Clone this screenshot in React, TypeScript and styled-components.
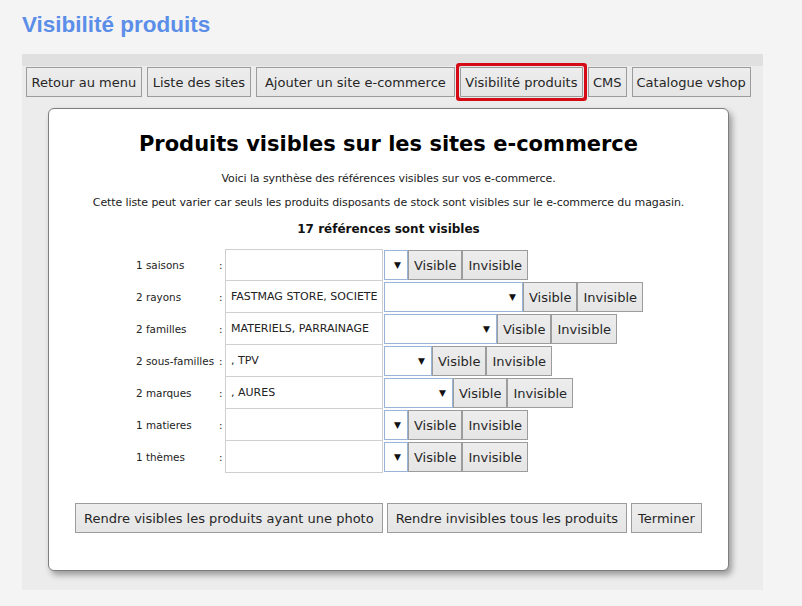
import React from "react";
import styled, { createGlobalStyle } from "styled-components";

const Global = createGlobalStyle`
  html, body { margin: 0; padding: 0; background: #f4f4f4; }
  body { font-family: "DejaVu Sans", Verdana, sans-serif; color: #222; }
  * { box-sizing: border-box; }
`;

const Page = styled.div`
  width: 802px;
  height: 606px;
  padding: 12px 0 0 22px;
  overflow: hidden;
`;

const Title = styled.h1`
  margin: 0 0 16px 0;
  font-family: "Liberation Sans", Arial, sans-serif;
  font-weight: bold;
  font-size: 22.5px;
  line-height: 26px;
  color: #5b8ee8;
`;

const Panel = styled.div`
  width: 741px;
  height: 536px;
  background: #ececec;
  border-top: 12px solid #e0e0e0;
  padding: 1px 0 0 4px;
`;

const TabBar = styled.div`
  display: flex;
  gap: 5px;
`;

const Btn = styled.button<{ $active?: boolean; $pad?: number }>`
  height: 30px;
  padding: 0 ${(p) => p.$pad ?? 4.5}px;
  font-family: "DejaVu Sans", Verdana, sans-serif;
  font-size: 13px;
  color: #262626;
  background: linear-gradient(#ededed, #e5e5e5);
  border: 1px solid #9c9c9c;
  border-radius: 0;
  cursor: pointer;
  white-space: nowrap;
  ${(p) =>
    p.$active
      ? `box-shadow: 0 0 0 1px #e9e9e9, 0 0 0 4px #d40b16; border-radius: 1px;`
      : ""}
`;

const Card = styled.div`
  margin: 11px 0 0 22px;
  width: 681px;
  height: 463px;
  background: #fff;
  border: 1px solid #7d7d7d;
  border-radius: 6px;
  box-shadow: 3px 4px 6px rgba(0, 0, 0, 0.35);
  padding: 23px 0 0 0;
  display: flex;
  flex-direction: column;
`;

const Heading = styled.h2`
  margin: 0;
  text-align: center;
  font-size: 21px;
  line-height: 24px;
  font-weight: bold;
  color: #000;
`;

const Note = styled.p<{ $gap: number }>`
  margin: ${(p) => p.$gap}px 0 0 0;
  text-align: center;
  font-size: 11px;
  line-height: 14px;
  letter-spacing: -0.1px;
  color: #222;
`;

const Count = styled.p`
  margin: 11px 0 0 0;
  text-align: center;
  font-size: 12px;
  line-height: 16px;
  font-weight: bold;
  color: #111;
`;

const Table = styled.div`
  margin: 12px 0 0 87px;
  display: grid;
  grid-template-columns: 83px 6px 158px auto;
  grid-auto-rows: 32px;
`;

const Label = styled.div`
  font-size: 10.4px;
  display: flex;
  align-items: center;
  color: #222;
  white-space: nowrap;
`;

const Colon = styled(Label)``;

const TextBox = styled.div<{ $first?: boolean }>`
  border: 1px solid #cfcfcf;
  border-top-width: ${(p) => (p.$first ? "1px" : "0")};
  display: flex;
  align-items: center;
  padding-left: 5px;
  font-size: 11px;
  color: #222;
  white-space: nowrap;
`;

const Controls = styled.div`
  display: flex;
  align-items: center;
  padding-left: 1px;
`;

const SelectBox = styled.div`
  height: 30px;
  border: 1px solid #98b4d8;
  background: #fff;
  display: flex;
  align-items: center;
  justify-content: flex-end;
  padding-right: 6px;
  font-size: 9px;
  color: #111;
`;

const SmallBtn = styled(Btn)`
  height: 30px;
  padding: 0 5px;
`;

const Footer = styled.div`
  margin: 30px 0 0 26px;
  display: flex;
  gap: 4px;
`;

const rows = [
  { label: "1 saisons", value: "", sel: 24 },
  { label: "2 rayons", value: "FASTMAG STORE, SOCIETE", sel: 139 },
  { label: "2 familles", value: "MATERIELS, PARRAINAGE", sel: 113 },
  { label: "2 sous-familles", value: ", TPV", sel: 48 },
  { label: "2 marques", value: ", AURES", sel: 69 },
  { label: "1 matieres", value: "", sel: 24 },
  { label: "1 thèmes", value: "", sel: 24 },
];

export default function App() {
  return (
    <Page>
      <Global />
      <Title>Visibilité produits</Title>
      <Panel>
        <TabBar>
          <Btn>Retour au menu</Btn>
          <Btn $pad={5}>Liste des sites</Btn>
          <Btn $pad={8}>Ajouter un site e-commerce</Btn>
          <Btn $active>Visibilité produits</Btn>
          <Btn $pad={4}>CMS</Btn>
          <Btn $pad={4}>Catalogue vshop</Btn>
        </TabBar>
        <Card>
          <Heading>Produits visibles sur les sites e-commerce</Heading>
          <Note $gap={16}>Voici la synthèse des références visibles sur vos e-commerce.</Note>
          <Note $gap={10}>
            Cette liste peut varier car seuls les produits disposants de stock sont visibles sur le
            e-commerce du magasin.
          </Note>
          <Count>17 références sont visibles</Count>
          <Table>
            {rows.map((r, i) => (
              <React.Fragment key={r.label}>
                <Label>{r.label}</Label>
                <Colon>:</Colon>
                <TextBox $first={i === 0}>{r.value}</TextBox>
                <Controls>
                  <SelectBox style={{ width: r.sel }}>▼</SelectBox>
                  <SmallBtn>Visible</SmallBtn>
                  <SmallBtn>Invisible</SmallBtn>
                </Controls>
              </React.Fragment>
            ))}
          </Table>
          <Footer>
            <Btn $pad={8}>Rendre visibles les produits ayant une photo</Btn>
            <Btn $pad={8}>Rendre invisibles tous les produits</Btn>
            <Btn $pad={6}>Terminer</Btn>
          </Footer>
        </Card>
      </Panel>
    </Page>
  );
}
